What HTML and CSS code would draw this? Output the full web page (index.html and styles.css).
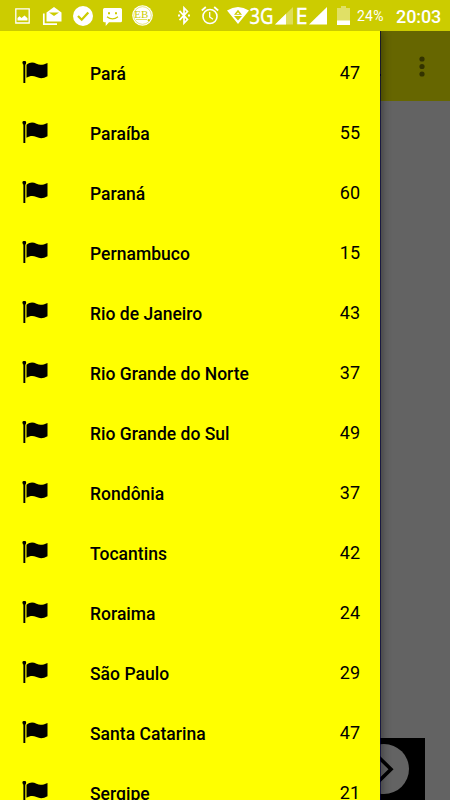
FILE: index.html
```html
<!DOCTYPE html>
<html lang="pt-BR">
<head>
    <meta charset="UTF-8">
    <meta name="viewport" content="width=device-width, initial-scale=1.0">
    <title>Estados</title>
    <link rel="stylesheet" href="styles.css">
</head>
<body>
    <svg class="defs" width="0" height="0">
        <symbol id="flag" viewBox="0 0 26 22">
            <circle cx="2.300" cy="1.800" r="1.900"/>
            <path d="M1.400 2h1.900v20H1.400z"/>
            <path d="M4.500 3.800C8 1 11 1 14.500 2.800C18 4.600 21 4 25.500 1.900V15.200C21.500 17.600 18 17.600 14.500 16.100C11 14.500 8 14.700 4.500 16.800z"/>
        </symbol>
    </svg>

    <div class="screen">
        <header class="status-bar">
            <div class="notifications">
                <svg class="icon-image" width="15" height="16" viewBox="0 0 15 16"><path d="M.8.8h13.400v14.200H.8z" fill="none" stroke="#fff" stroke-width="1.300"/><path d="M2.500 12.500V10l2-1.800 2 1.800 3-2.500 3 2.700v2.300z"/></svg>
                <svg class="icon-mail" width="19" height="18" viewBox="0 0 19 18"><path d="M.8 6.500v10.700H14" fill="none" stroke="#fff" stroke-width="1.700"/><path d="M3.500 5.500L11 0l7.500 5.500V14.500h-15z"/><path d="M6 5.500h10L11 9z" fill="#cccc00"/></svg>
                <svg class="icon-check" width="20" height="20" viewBox="0 0 20 20"><circle cx="10" cy="10" r="10"/><path d="M5 10l3.700 3.700 6.600-7.200" fill="none" stroke="#cccc00" stroke-width="2.300"/></svg>
                <svg class="icon-message" width="19" height="18" viewBox="0 0 19 18"><path d="M1.500 0h16q1.500 0 1.500 1.500v11.500q0 1.300-1.500 1.300H6L2.700 18v-3.700H1.500Q0 14.300 0 13V1.500Q0 0 1.500 0z"/><path d="M5 4.200h2v2H5zM12 4.200h2v2h-2z" fill="#cccc00"/><path d="M4 8.700q5.500 4.300 11 0" fill="none" stroke="#cccc00" stroke-width="1.300"/></svg>
                <svg class="icon-eb" width="21" height="21" viewBox="0 0 21 21"><circle cx="10.500" cy="10.500" r="10.300"/><circle cx="10.500" cy="10.500" r="8.800" fill="none" stroke="#cccc00" stroke-width=".5"/><text x="2.300" y="12.700" textLength="14" lengthAdjust="spacingAndGlyphs">EB</text><path d="M4 14.500h11M16 14.500h1.500v1.500H16z" fill="#cccc00" stroke="#cccc00" stroke-width=".6"/></svg>
            </div>
            <div class="system">
                <svg class="icon-bluetooth" width="12" height="19" viewBox="0 0 12 19"><path d="M1.500 4.800l8 8.700L6 17.200V1.800l3.500 3.700-8 8.700" fill="none" stroke="#fff" stroke-width="1.700"/><path d="M0 8.500h2v2H0zM10 8.500h2v2h-2z"/></svg>
                <svg class="icon-alarm" width="18" height="19" viewBox="0 0 18 19"><g fill="none" stroke="#fff"><circle cx="9" cy="10.500" r="7" stroke-width="1.600"/><path d="M.8 4.500l4-3.500M17.200 4.500l-4-3.500" stroke-width="1.700"/><path d="M8.700 6v5l3.300 2.300" stroke-width="1.300"/></g></svg>
                <svg class="icon-wifi" width="22" height="17" viewBox="0 0 22 17"><path d="M0 3.500q11-7 22 0L11 17z"/><path d="M11 2.800l4 5H7zM7 9h8l-4 4.500z" fill="#cccc00"/><path d="M11 5.300l1.500 1.700h-3z"/></svg>
                <svg class="net net-3g" width="23" height="22"><text x="-.5" y="18" textLength="24" lengthAdjust="spacingAndGlyphs">3G</text></svg>
                <svg class="icon-signal first" width="18" height="18" viewBox="0 0 18 18"><path d="M0 17.500L18 0v17.500z" opacity=".35"/><path d="M0 17.500L11 6.800v10.700z"/></svg>
                <svg class="net net-e" width="9" height="22"><text x="-1.500" y="18" textLength="12" lengthAdjust="spacingAndGlyphs">E</text></svg>
                <svg class="icon-signal" width="18" height="18" viewBox="0 0 18 18"><path d="M0 17.500L18 0v17.500z"/></svg>
                <svg class="icon-battery" width="13" height="19" viewBox="0 0 13 19"><path d="M4 0h5v2h4v13H0V2h4z" opacity=".4"/><path d="M0 14.500h13V19H0z"/></svg>
                <span class="percent">24%</span>
                <span class="clock">20:03</span>
            </div>
        </header>

        <div class="content">
            <nav class="drawer">
                <ul class="states">
                    <li class="state"><svg class="flag"><use href="#flag"/></svg><span class="name">Pará</span><span class="count">47</span></li>
                    <li class="state"><svg class="flag"><use href="#flag"/></svg><span class="name">Paraíba</span><span class="count">55</span></li>
                    <li class="state"><svg class="flag"><use href="#flag"/></svg><span class="name">Paraná</span><span class="count">60</span></li>
                    <li class="state"><svg class="flag"><use href="#flag"/></svg><span class="name">Pernambuco</span><span class="count">15</span></li>
                    <li class="state"><svg class="flag"><use href="#flag"/></svg><span class="name">Rio de Janeiro</span><span class="count">43</span></li>
                    <li class="state"><svg class="flag"><use href="#flag"/></svg><span class="name">Rio Grande do Norte</span><span class="count">37</span></li>
                    <li class="state"><svg class="flag"><use href="#flag"/></svg><span class="name">Rio Grande do Sul</span><span class="count">49</span></li>
                    <li class="state"><svg class="flag"><use href="#flag"/></svg><span class="name">Rondônia</span><span class="count">37</span></li>
                    <li class="state"><svg class="flag"><use href="#flag"/></svg><span class="name">Tocantins</span><span class="count">42</span></li>
                    <li class="state"><svg class="flag"><use href="#flag"/></svg><span class="name">Roraima</span><span class="count">24</span></li>
                    <li class="state"><svg class="flag"><use href="#flag"/></svg><span class="name">São Paulo</span><span class="count">29</span></li>
                    <li class="state"><svg class="flag"><use href="#flag"/></svg><span class="name">Santa Catarina</span><span class="count">47</span></li>
                    <li class="state"><svg class="flag"><use href="#flag"/></svg><span class="name">Sergipe</span><span class="count">21</span></li>
                </ul>
            </nav>
            <main class="page">
                <div class="toolbar">
                    <svg class="title-end" width="2" height="2"><path d="M0 0h1v2H0z" fill="#000"/></svg>
                    <svg class="menu-dots" width="6" height="22" viewBox="0 0 6 22"><circle cx="3" cy="3" r="2.600"/><circle cx="3" cy="10.500" r="2.600"/><circle cx="3" cy="18" r="2.600"/></svg>
                </div>
                <div class="banner">
                    <svg width="45" height="62" viewBox="0 0 45 62"><circle cx="4" cy="31" r="25" fill="#636363"/><path d="M-2 18.500L11 31.200-2 44" fill="none" stroke="#000" stroke-width="3.600"/></svg>
                </div>
            </main>
        </div>
    </div>
</body>
</html>
```
FILE: styles.css
```css
body {
    margin: 0;
    font-family: Roboto, sans-serif;
    color: #000;
}

.defs {
    position: absolute;
}

.screen {
    display: flex;
    flex-direction: column;
    width: 450px;
    height: 800px;
    overflow: hidden;
    background: #636363;
}

/* Status bar */
.status-bar {
    display: flex;
    justify-content: space-between;
    flex: none;
    box-sizing: border-box;
    height: 31px;
    padding: 0 10px 0 15px;
    background: #cccc00;
    color: #fff;
    fill: #fff;
}

.notifications,
.system {
    display: flex;
    align-items: center;
}

.status-bar svg {
    flex: none;
    overflow: visible;
}

.icon-mail {
    margin-left: 13px;
}

.icon-check {
    margin-left: 11px;
}

.icon-message {
    margin-left: 10px;
    margin-top: 3px;
}

.icon-eb {
    margin-left: 10px;
}

.icon-eb text {
    font-family: "Liberation Serif", serif;
    font-size: 11px;
    fill: #cccc00;
}

.icon-alarm {
    margin-left: 11px;
}

.icon-wifi {
    margin-left: 8px;
}

.net {
    margin-top: 3px;
    font-family: "Noto Sans", sans-serif;
    font-size: 22px;
    stroke: #fff;
    stroke-width: 0.4px;
}

.net-3g {
    margin-left: 1px;
}

.icon-signal.first {
    margin-left: 2px;
}

.net-e {
    margin-left: 4px;
}

.icon-signal {
    margin-left: 3px;
}

.icon-battery {
    margin-left: 10px;
}

.percent {
    width: 27px;
    margin: 1px 0 0 7px;
    font-size: 14px;
    letter-spacing: 0.2px;
}

.clock {
    width: 44px;
    margin: 2px 0 0 12px;
    font-size: 18px;
    font-weight: 500;
    letter-spacing: -0.1px;
}

/* Drawer */
.content {
    display: flex;
    flex: 1;
    min-height: 0;
}

.drawer {
    position: relative;
    flex: none;
    width: 380px;
    background: #ffff00;
    box-shadow: 1px 0 0 rgba(0, 0, 60, 0.65), 2px 0 9px rgba(0, 0, 0, 0.4);
    clip-path: inset(0 -12px 0 0);
}

.states {
    margin: 0;
    padding: 12px 0 0;
    list-style: none;
}

.state {
    display: flex;
    align-items: center;
    height: 60px;
    padding: 0 20px 0 22px;
}

.flag {
    flex: none;
    width: 26px;
    height: 22px;
    margin: -2px 42px 0 0;
}

.name {
    flex: 1;
    padding-top: 1px;
    font-size: 17.5px;
    font-weight: 500;
    letter-spacing: 0.02px;
}

.count {
    margin-top: -1px;
    font-size: 18px;
}

/* Page behind the drawer */
.page {
    display: flex;
    flex: 1;
    flex-direction: column;
    justify-content: space-between;
}

.toolbar {
    display: flex;
    justify-content: space-between;
    box-sizing: border-box;
    height: 70px;
    padding: 25px 25px 0 0;
    background: #666600;
    fill: #333300;
}

.title-end {
    margin-top: 18px;
}

.banner {
    width: 45px;
    height: 62px;
    background: #000;
}

.banner svg {
    display: block;
}
```
